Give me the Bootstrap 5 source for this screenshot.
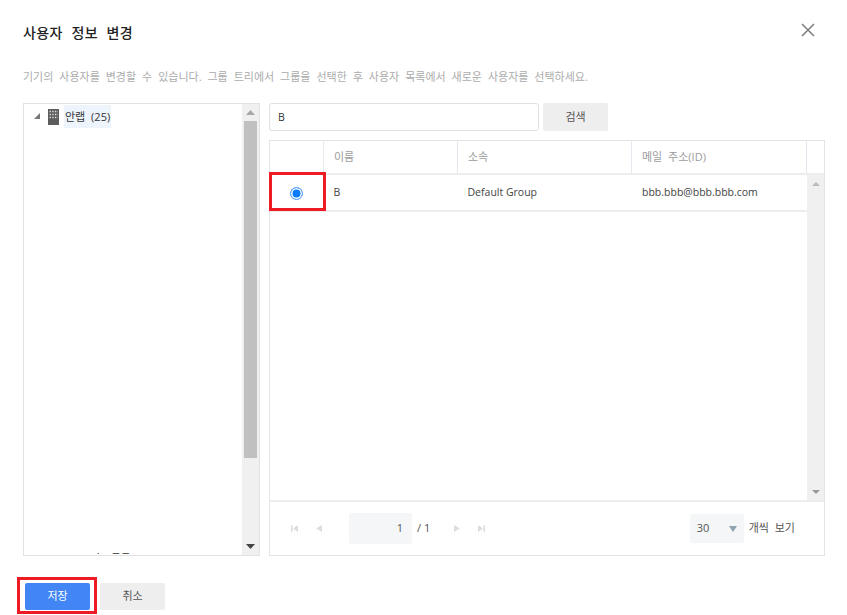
<!DOCTYPE html>
<html lang="ko">
<head>
<meta charset="utf-8">
<title>사용자 정보 변경</title>
<link href="https://cdn.jsdelivr.net/npm/bootstrap@5.3.0/dist/css/bootstrap.min.css" rel="stylesheet">
<style>
html,body{height:615px;overflow:hidden;background:#fff}
body{font-family:"Open Sans","Noto Sans CJK KR",sans-serif;font-size:11px;color:#444}
.dlg{width:847px;height:615px;padding:0 22px 0 23px;display:flex;flex-direction:column}
.dlg-head{height:67px;padding-top:23px;display:flex;justify-content:space-between;align-items:flex-start}
.dlg-title{font-size:14px;font-weight:500;color:#222;line-height:20px;margin:0;letter-spacing:.4px;word-spacing:4.500px}
.dlg-close{background:none;border:0;padding:0;width:14px;height:14px;margin:0 10px 0 0;line-height:0}
.dlg-desc{height:36px;line-height:20px;color:#acacac;margin:0;word-spacing:3.100px}
.dlg-body{display:flex;gap:9px;height:453px}
.tree-box{width:237px;border:1px solid #e2e2e2;display:flex;overflow:hidden}
.tree-main{flex:1;display:flex;flex-direction:column;justify-content:space-between;overflow:hidden;padding:1px 0 0 10px}
.tree-row{display:flex;align-items:center;height:23px}
.tree-arrow{margin:-1px 7px 0 0}
.tree-label{background:#edf4fb;padding:0 1px;line-height:23px;color:#333;margin-left:5px;word-spacing:3px}
.tree-cut{height:2px;overflow:hidden;padding-left:56px;line-height:0;color:#333}
.tree-cut span{display:block;line-height:15px;height:15px;margin-top:-12px}
.sbar{width:17px;background:#f0f0f0;display:flex;flex-direction:column;align-items:center;flex:none}
.sbar-cap{height:17px;display:flex;align-items:center;justify-content:center;flex:none}
.sbar-thumb{width:13px;background:#c0c0c0;height:337px}
.sbar-fill{flex:1}
.right-col{flex:1;display:flex;flex-direction:column;min-width:0}
.search-row{display:flex;gap:4px;height:28px;margin-bottom:9px}
.search-input{width:270px;height:28px;border:1px solid #e1e1e1;border-radius:3px;font-size:10.5px;padding:0 8px;color:#333;box-shadow:none}
.btn-gray{background:#eee;color:#555;border:0;border-radius:2px;font-size:11px;width:65px;height:28px;padding:0}
.btn-gray:hover{background:#eee;color:#555}
.grid-box{flex:1;border:1px solid #e4e4e4;display:flex;flex-direction:column;min-height:0}
.grid-head{display:flex;height:34px;border-bottom:2px solid #ededed;flex:none}
.gc{display:flex;align-items:center;padding-left:10px;border-right:1px solid #e4e8ef;flex:none}
.gc1{width:54px;padding:0;justify-content:center}
.gc2{width:134px}
.gc3{width:174px}
.gc4{width:175px}
.grid-head .gc{color:#9c9c9c;padding-top:1px}
.gc-addr{word-spacing:3px}
.grid-mid{flex:1;display:flex;min-height:0}
.grid-rows{flex:1;min-width:0}
.grid-row{display:flex;height:37px;border-bottom:2px solid #ededed;color:#444;position:relative;font-size:10.5px}
.grid-row .gc{border-right:0;padding-top:1px}
.grid-row .gc2{padding-left:9.5px}
.grid-row .gc3{padding-left:9.5px}
.red-cell{position:absolute;left:-1px;top:-3px;width:57px;height:39px;border:3px solid #ed1c24}
.radio-mark{width:13px;height:13px;margin-left:-1px;border-radius:50%;border:1px solid #5aa6fb;background:#0b7cff;box-shadow:inset 0 0 0 1.5px #fff;display:block}
.grid-head .gc-last{width:17px;border-right:0;padding:0}
.pager{height:55px;border-top:2px solid #ededed;flex:none;display:flex;align-items:center;padding:0 0 0 21px}
.pg-ico{display:flex;gap:18px;align-items:center}
.pg-input{width:63px;height:31px;background:#f4f6f7;border-radius:3px;display:flex;align-items:center;justify-content:flex-end;padding-right:9px;margin:0 5px 0 27px;color:#555}
.pg-total{color:#555;margin-right:24px}
.pg-size{width:54px;height:29px;background:#f4f6f7;border-radius:3px;margin-left:auto;display:flex;align-items:center;justify-content:space-between;padding:0 7px 0 7px;color:#555}
.pg-text{margin:0 29px 0 5px;color:#555;word-spacing:3px}
.dlg-foot{display:flex;align-items:flex-start;gap:3px;margin:21px 0 0 -6px}
.red-wrap{border:3px solid #ed1c24;padding:3px 4px 1px 5px;display:flex}
.btn-save{background:#4286f5;color:#fff;border:0;border-radius:2px;font-size:11px;width:65px;height:27px;padding:0}
.btn-save:hover{background:#4286f5;color:#fff}
.dlg-foot .btn-gray{height:27px;margin-top:6px}
</style>
</head>
<body>
<div class="dlg">
  <div class="dlg-head">
    <h1 class="dlg-title">사용자 정보 변경</h1>
    <button class="dlg-close" type="button" aria-label="닫기">
      <svg width="14" height="14" viewBox="0 0 14 14"><path d="M1 1 13 13M13 1 1 13" stroke="#808080" stroke-width="1.6" fill="none"/></svg>
    </button>
  </div>
  <p class="dlg-desc">기기의 사용자를 변경할 수 있습니다. 그룹 트리에서 그룹을 선택한 후 사용자 목록에서 새로운 사용자를 선택하세요.</p>
  <div class="dlg-body">
    <div class="tree-box">
      <div class="tree-main">
        <div class="tree-row">
          <svg width="7" height="7" viewBox="0 0 7 7" class="tree-arrow"><path d="M6 0V6H0Z" fill="#777"/></svg>
          <svg width="11" height="16" viewBox="0 0 11 16"><rect width="11" height="16" fill="#5c5c5c"/><path d="M1.500 2.500H10M1.500 5.500H10M1.500 8.500H10" stroke="#ddd" stroke-width="1.400" stroke-dasharray="1.400 1.300" fill="none"/></svg>
          <span class="tree-label">안랩 (25)</span>
        </div>
        <div class="tree-cut"><span>시스템팀</span></div>
      </div>
      <div class="sbar">
        <div class="sbar-cap"><svg width="9" height="5" viewBox="0 0 9 5"><path d="M4.500 0 9 5H0Z" fill="#a8a8a8"/></svg></div>
        <div class="sbar-thumb"></div>
        <div class="sbar-fill"></div>
        <div class="sbar-cap"><svg width="9" height="5" viewBox="0 0 9 5"><path d="M0 0H9L4.500 5Z" fill="#444"/></svg></div>
      </div>
    </div>
    <div class="right-col">
      <div class="search-row">
        <input class="form-control search-input" type="text" value="B" aria-label="검색어">
        <button class="btn btn-gray" type="button">검색</button>
      </div>
      <div class="grid-box">
        <div class="grid-head">
          <div class="gc gc1"></div>
          <div class="gc gc2">이름</div>
          <div class="gc gc3">소속</div>
          <div class="gc gc4 gc-addr">메일 주소(ID)</div>
          <div class="gc gc-last"></div>
        </div>
        <div class="grid-mid">
          <div class="grid-rows">
            <div class="grid-row">
              <div class="gc gc1"><span class="radio-mark"></span></div>
              <div class="gc gc2">B</div>
              <div class="gc gc3">Default Group</div>
              <div class="gc gc4">bbb.bbb@bbb.bbb.com</div>
              <div class="red-cell"></div>
            </div>
          </div>
          <div class="sbar">
            <div class="sbar-cap"><svg width="8" height="4" viewBox="0 0 8 4"><path d="M4 0 8 4H0Z" fill="#bbb"/></svg></div>
            <div class="sbar-fill"></div>
            <div class="sbar-cap"><svg width="8" height="4" viewBox="0 0 8 4"><path d="M0 0H8L4 4Z" fill="#999"/></svg></div>
          </div>
        </div>
        <div class="pager">
          <div class="pg-ico">
            <svg width="7" height="7" viewBox="0 0 7 7"><path d="M0 0H1.500V7H0ZM7 0V7L2 3.500Z" fill="#ddd"/></svg>
            <svg width="6" height="7" viewBox="0 0 6 7"><path d="M6 0V7L0 3.500Z" fill="#ddd"/></svg>
          </div>
          <div class="pg-input">1</div>
          <span class="pg-total">/ 1</span>
          <div class="pg-ico">
            <svg width="6" height="7" viewBox="0 0 6 7"><path d="M0 0V7L6 3.500Z" fill="#ddd"/></svg>
            <svg width="7" height="7" viewBox="0 0 7 7"><path d="M0 0V7L5 3.500ZM5.500 0H7V7H5.500Z" fill="#ddd"/></svg>
          </div>
          <div class="pg-size">30 <svg width="8" height="6" viewBox="0 0 8 6"><path d="M0 0H8L4 6Z" fill="#8fa3ae"/></svg></div>
          <span class="pg-text">개씩 보기</span>
        </div>
      </div>
    </div>
  </div>
  <div class="dlg-foot">
    <div class="red-wrap"><button class="btn btn-save" type="button">저장</button></div>
    <button class="btn btn-gray" type="button">취소</button>
  </div>
</div>
<script src="https://cdn.jsdelivr.net/npm/bootstrap@5.3.0/dist/js/bootstrap.bundle.min.js"></script>
</body>
</html>
